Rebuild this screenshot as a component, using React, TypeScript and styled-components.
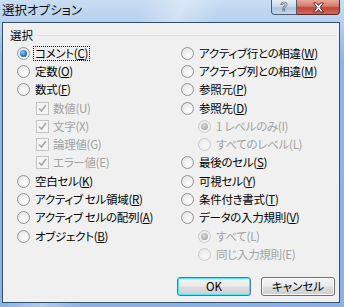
import React from "react";
import styled, { createGlobalStyle } from "styled-components";

const GlobalStyle = createGlobalStyle`
  html, body {
    margin: 0;
    padding: 0;
  }
  body {
    width: 344px;
    height: 307px;
    overflow: hidden;
    font-family: "Noto Sans CJK JP", "Liberation Sans", sans-serif;
    font-size: 11.5px;
    font-feature-settings: "palt";
    color: #000;
  }
`;

const Frame = styled.div`
  width: 344px;
  height: 307px;
  box-sizing: border-box;
  display: flex;
  flex-direction: column;
  padding: 0 4px 4px 2px;
  background:
    linear-gradient(115deg, rgba(255, 255, 255, 0) 30%, rgba(255, 255, 255, 0.35) 38%, rgba(255, 255, 255, 0) 46%),
    linear-gradient(to bottom, #c9ddf3 0px, #b7d0ee 22px, #8fb4e6 60px, #8cb2e6 100%);
`;

const TitleBar = styled.div`
  height: 22px;
  display: flex;
  align-items: flex-start;
  justify-content: space-between;
`;

const Title = styled.div`
  padding-top: 2px;
  font-size: 12.5px;
  line-height: 16px;
  color: #111;
`;

const CaptionButtons = styled.div`
  display: flex;
`;

const CaptionButton = styled.div<{ $close?: boolean }>`
  width: ${(p) => (p.$close ? "43px" : "26px")};
  height: 15px;
  box-sizing: border-box;
  border: 1px solid ${(p) => (p.$close ? "#5a2b25" : "#4a5c74")};
  border-top: none;
  border-radius: ${(p) => (p.$close ? "0 0 4px 0" : "0 0 0 4px")};
  border-left-width: ${(p) => (p.$close ? "0" : "1px")};
  display: flex;
  align-items: center;
  justify-content: center;
  background: ${(p) =>
    p.$close
      ? "linear-gradient(to bottom, #e8a89c 0%, #d7786a 45%, #c0463a 55%, #d0695a 100%)"
      : "linear-gradient(to bottom, #e4edf7 0%, #cddcee 45%, #aec4df 55%, #c3d6ec 100%)"};
`;

const HelpGlyph = styled.span`
  font-family: "Liberation Sans", sans-serif;
  font-weight: bold;
  font-size: 12px;
  line-height: 12px;
  color: #fff;
  -webkit-text-stroke: 0.6px #3a4a60;
`;

const Client = styled.div`
  flex: 1;
  border: 1px solid #34506f;
  background: #f0f0f0;
  padding: 5px 3px 0 7px;
  display: flex;
  flex-direction: column;
`;

const GroupHeader = styled.div`
  height: 14px;
  display: flex;
  align-items: center;
`;

const GroupLabel = styled.span`
  line-height: 14px;
`;

const GroupLine = styled.div`
  flex: 1;
  height: 1px;
  margin-left: 5px;
  background: #d5dfe5;
`;

const Columns = styled.div`
  margin: 2px 0 0 7px;
  display: grid;
  grid-template-columns: 164px 1fr;
`;

const Column = styled.div`
  display: flex;
  flex-direction: column;
`;

const Row = styled.div<{ $indent: number; $disabled?: boolean }>`
  height: 18.3px;
  display: flex;
  align-items: center;
  padding-left: ${(p) => p.$indent}px;
  color: ${(p) => (p.$disabled ? "#a3a3a3" : "#000")};
  letter-spacing: -0.3px;
  white-space: nowrap;
`;

const RadioCircle = styled.span<{ $checked?: boolean; $disabled?: boolean }>`
  width: 13px;
  height: 13px;
  box-sizing: border-box;
  border-radius: 50%;
  border: 1px solid ${(p) => (p.$disabled ? "#cacaca" : "#959595")};
  background: ${(p) =>
    p.$disabled
      ? "radial-gradient(circle at 60% 65%, #f8f8f8 0%, #e6e6e6 100%)"
      : "radial-gradient(circle at 60% 65%, #ffffff 0%, #dcdcdc 100%)"};
  margin-right: 4px;
  flex: none;
  display: flex;
  align-items: center;
  justify-content: center;
`;

const RadioDot = styled.span<{ $disabled?: boolean }>`
  width: 7px;
  height: 7px;
  border-radius: 50%;
  background: ${(p) =>
    p.$disabled
      ? "radial-gradient(circle at 40% 35%, #d8d8d8 0%, #9a9a9a 100%)"
      : "radial-gradient(circle at 40% 35%, #8fd0ff 0%, #2a7fd6 50%, #0b3f8a 100%)"};
`;

const CheckBox = styled.span`
  width: 13px;
  height: 13px;
  box-sizing: border-box;
  border: 1px solid #c3c3c3;
  background: #f4f4f4;
  margin-right: 3px;
  flex: none;
  display: flex;
  align-items: center;
  justify-content: center;
`;

const Label = styled.span<{ $focus?: boolean }>`
  line-height: 13px;
  padding: 0 1px;
  outline: ${(p) => (p.$focus ? "1px dotted #000" : "none")};
  outline-offset: 0;
`;

const ButtonRow = styled.div`
  margin-top: 13px;
  padding-right: 1px;
  display: flex;
  justify-content: flex-end;
  gap: 10px;
`;

const Button = styled.button<{ $default?: boolean }>`
  width: 74px;
  height: 19px;
  box-sizing: border-box;
  padding: 0;
  border: 1px solid ${(p) => (p.$default ? "#3c7fb1" : "#707070")};
  border-radius: 3px;
  box-shadow: ${(p) => (p.$default ? "inset 0 0 0 1px #48e3fc" : "inset 0 0 0 1px #fbfbfb")};
  background: linear-gradient(to bottom, #f2f2f2 0%, #ebebeb 48%, #dddddd 52%, #cfcfcf 100%);
  font-family: "Noto Sans CJK JP", "Liberation Sans", sans-serif;
  font-feature-settings: "palt";
  font-size: 11.5px;
  line-height: 15px;
  color: #000;
`;

type Item = {
  text: string;
  key?: string;
  after?: string;
  kind: "radio" | "check" | "subradio";
  checked?: boolean;
  disabled?: boolean;
  focus?: boolean;
};

const left: Item[] = [
  { text: "コメント(", key: "C", after: ")", kind: "radio", checked: true, focus: true },
  { text: "定数(", key: "O", after: ")", kind: "radio" },
  { text: "数式(", key: "F", after: ")", kind: "radio" },
  { text: "数値(U)", kind: "check", checked: true, disabled: true },
  { text: "文字(X)", kind: "check", checked: true, disabled: true },
  { text: "論理値(G)", kind: "check", checked: true, disabled: true },
  { text: "エラー値(E)", kind: "check", checked: true, disabled: true },
  { text: "空白セル(", key: "K", after: ")", kind: "radio" },
  { text: "アクティブ セル領域(", key: "R", after: ")", kind: "radio" },
  { text: "アクティブ セルの配列(", key: "A", after: ")", kind: "radio" },
  { text: "オブジェクト(", key: "B", after: ")", kind: "radio" },
];

const right: Item[] = [
  { text: "アクティブ行との相違(", key: "W", after: ")", kind: "radio" },
  { text: "アクティブ列との相違(", key: "M", after: ")", kind: "radio" },
  { text: "参照元(", key: "P", after: ")", kind: "radio" },
  { text: "参照先(", key: "D", after: ")", kind: "radio" },
  { text: "1 レベルのみ(I)", kind: "subradio", checked: true, disabled: true },
  { text: "すべてのレベル(L)", kind: "subradio", disabled: true },
  { text: "最後のセル(", key: "S", after: ")", kind: "radio" },
  { text: "可視セル(", key: "Y", after: ")", kind: "radio" },
  { text: "条件付き書式(", key: "T", after: ")", kind: "radio" },
  { text: "データの入力規則(", key: "V", after: ")", kind: "radio" },
  { text: "すべて(L)", kind: "subradio", checked: true, disabled: true },
  { text: "同じ入力規則(E)", kind: "subradio", disabled: true },
];

const CloseIcon = () => (
  <svg width="13" height="11" viewBox="0 0 13 11">
    <path
      d="M1.5 1 H4.5 L6.5 3.5 L8.5 1 H11.5 L8 5.5 L11.5 10 H8.5 L6.5 7.5 L4.5 10 H1.5 L5 5.5 Z"
      fill="#fff"
      stroke="#4a1e18"
      strokeWidth="0.9"
      strokeLinejoin="round"
    />
  </svg>
);

const CheckMark = () => (
  <svg width="9" height="9" viewBox="0 0 9 9">
    <path d="M1 4.5 L3.5 7 L8 1" fill="none" stroke="#a8a8a8" strokeWidth="1.6" />
  </svg>
);

const OptionRow = ({ item, sub }: { item: Item; sub: number }) => {
  const indent = item.kind === "radio" ? 0 : sub;
  return (
    <Row $indent={indent} $disabled={item.disabled}>
      {item.kind === "check" ? (
        <CheckBox>{item.checked && <CheckMark />}</CheckBox>
      ) : (
        <RadioCircle $disabled={item.disabled}>
          {item.checked && <RadioDot $disabled={item.disabled} />}
        </RadioCircle>
      )}
      <Label $focus={item.focus}>
        {item.text}
        {item.key && <u>{item.key}</u>}
        {item.after}
      </Label>
    </Row>
  );
};

export default function App() {
  return (
    <>
      <GlobalStyle />
      <Frame>
        <TitleBar>
          <Title>選択オプション</Title>
          <CaptionButtons>
            <CaptionButton>
              <HelpGlyph>?</HelpGlyph>
            </CaptionButton>
            <CaptionButton $close>
              <CloseIcon />
            </CaptionButton>
          </CaptionButtons>
        </TitleBar>
        <Client>
          <GroupHeader>
            <GroupLabel>選択</GroupLabel>
            <GroupLine />
          </GroupHeader>
          <Columns>
            <Column>
              {left.map((it) => (
                <OptionRow key={it.text} item={it} sub={19} />
              ))}
            </Column>
            <Column>
              {right.map((it) => (
                <OptionRow key={it.text} item={it} sub={17} />
              ))}
            </Column>
          </Columns>
          <ButtonRow>
            <Button $default>OK</Button>
            <Button>キャンセル</Button>
          </ButtonRow>
        </Client>
      </Frame>
    </>
  );
}
